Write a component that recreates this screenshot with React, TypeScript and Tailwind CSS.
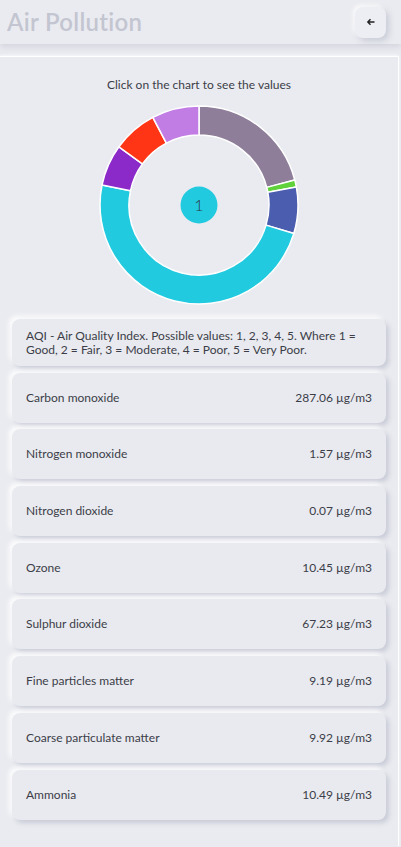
import React from 'react';

type Slice = { from: number; to: number; color: string };

// angles measured clockwise from 12 o'clock
const slices: Slice[] = [
  { from: 0, to: 75.4, color: '#8e7e9a' },
  { from: 75.4, to: 79.5, color: '#5fd13a' },
  { from: 79.5, to: 106.7, color: '#4a5daf' },
  { from: 106.7, to: 281.7, color: '#22cae0' },
  { from: 281.7, to: 306, color: '#8b2ac8' },
  { from: 306, to: 332.2, color: '#ff3516' },
  { from: 332.2, to: 360, color: '#c27de5' },
];

const pollutants = [
  { name: 'Carbon monoxide', value: '287.06' },
  { name: 'Nitrogen monoxide', value: '1.57' },
  { name: 'Nitrogen dioxide', value: '0.07' },
  { name: 'Ozone', value: '10.45' },
  { name: 'Sulphur dioxide', value: '67.23' },
  { name: 'Fine particles matter', value: '9.19' },
  { name: 'Coarse particulate matter', value: '9.92' },
  { name: 'Ammonia', value: '10.49' },
];

const C = 101;
const R = 99;
const r = 70;

const pt = (rad: number, deg: number) => {
  const a = ((deg - 90) * Math.PI) / 180;
  return `${(C + rad * Math.cos(a)).toFixed(2)} ${(C + rad * Math.sin(a)).toFixed(2)}`;
};

const arc = (s: Slice) => {
  const large = s.to - s.from > 180 ? 1 : 0;
  return [
    `M ${pt(R, s.from)}`,
    `A ${R} ${R} 0 ${large} 1 ${pt(R, s.to)}`,
    `L ${pt(r, s.to)}`,
    `A ${r} ${r} 0 ${large} 0 ${pt(r, s.from)}`,
    'Z',
  ].join(' ');
};

const cardShadow =
  'shadow-[3px_3px_5px_rgba(160,163,185,0.45),-3px_-3px_5px_rgba(255,255,255,0.9)]';

const App: React.FC = () => {
  return (
    <div className="min-h-[847px] bg-[#eaebf0] text-[#3b3d48]" style={{ fontFamily: 'Lato, "Noto Sans", sans-serif' }}>
      <header className="h-[44px] flex items-center justify-between pl-[7px] pr-[15px] bg-[#eaebf0] shadow-[0_3px_6px_rgba(170,172,190,0.35)] relative z-10">
        <h1 className="text-[24px] font-semibold text-[#c3c5d0] tracking-[0.3px]">Air Pollution</h1>
        <button className="w-[31px] h-[31px] rounded-lg bg-[#eceef3] flex items-center justify-center shadow-[3px_3px_6px_rgba(160,163,185,0.45),-2px_-2px_4px_rgba(255,255,255,0.9)]">
          <svg width="10" height="10" viewBox="0 0 10 10" fill="none" stroke="#222" strokeWidth="1.4">
            <path d="M8.5 5H2M4.5 2.2L1.8 5l2.7 2.8" />
          </svg>
        </button>
      </header>

      <main className="mt-[12px] mr-[2px] border-t border-r border-white pt-[21px] pb-[26px] pl-[12px] pr-[12px] shadow-[0_-1px_2px_rgba(255,255,255,0.6)]">
        <p className="text-[12px] leading-[14px] text-center text-[#3b3d48]">Click on the chart to see the values</p>

        <div className="flex justify-center mt-[12px]">
          <svg width="202" height="202" viewBox="0 0 202 202">
            {slices.map((s) => (
              <path key={s.color} d={arc(s)} fill={s.color} stroke="#fff" strokeWidth="1.5" strokeLinejoin="round" />
            ))}
            <circle cx={C} cy={C} r="18.5" fill="#22cae0" />
            <text x={C} y={C + 5.5} textAnchor="middle" fontSize="16" fontWeight="300" fill="#2b3a48">1</text>
          </svg>
        </div>

        <div className="mt-[13px] flex flex-col gap-[6.7px]">
          <div className={`rounded-lg bg-[#e9eaef] px-[14px] py-[10px] text-[12px] leading-[13.5px] ${cardShadow}`}>
            AQI - Air Quality Index. Possible values: 1, 2, 3, 4, 5. Where 1 = Good, 2 = Fair, 3 = Moderate, 4 = Poor, 5 = Very Poor.
          </div>
          {pollutants.map((p) => (
            <div
              key={p.name}
              className={`h-[50px] rounded-lg bg-[#e9eaef] px-[14px] flex items-center justify-between text-[12px] ${cardShadow}`}
            >
              <span>{p.name}</span>
              <span>{p.value} µg/m3</span>
            </div>
          ))}
        </div>
      </main>
    </div>
  );
};

export default App;
